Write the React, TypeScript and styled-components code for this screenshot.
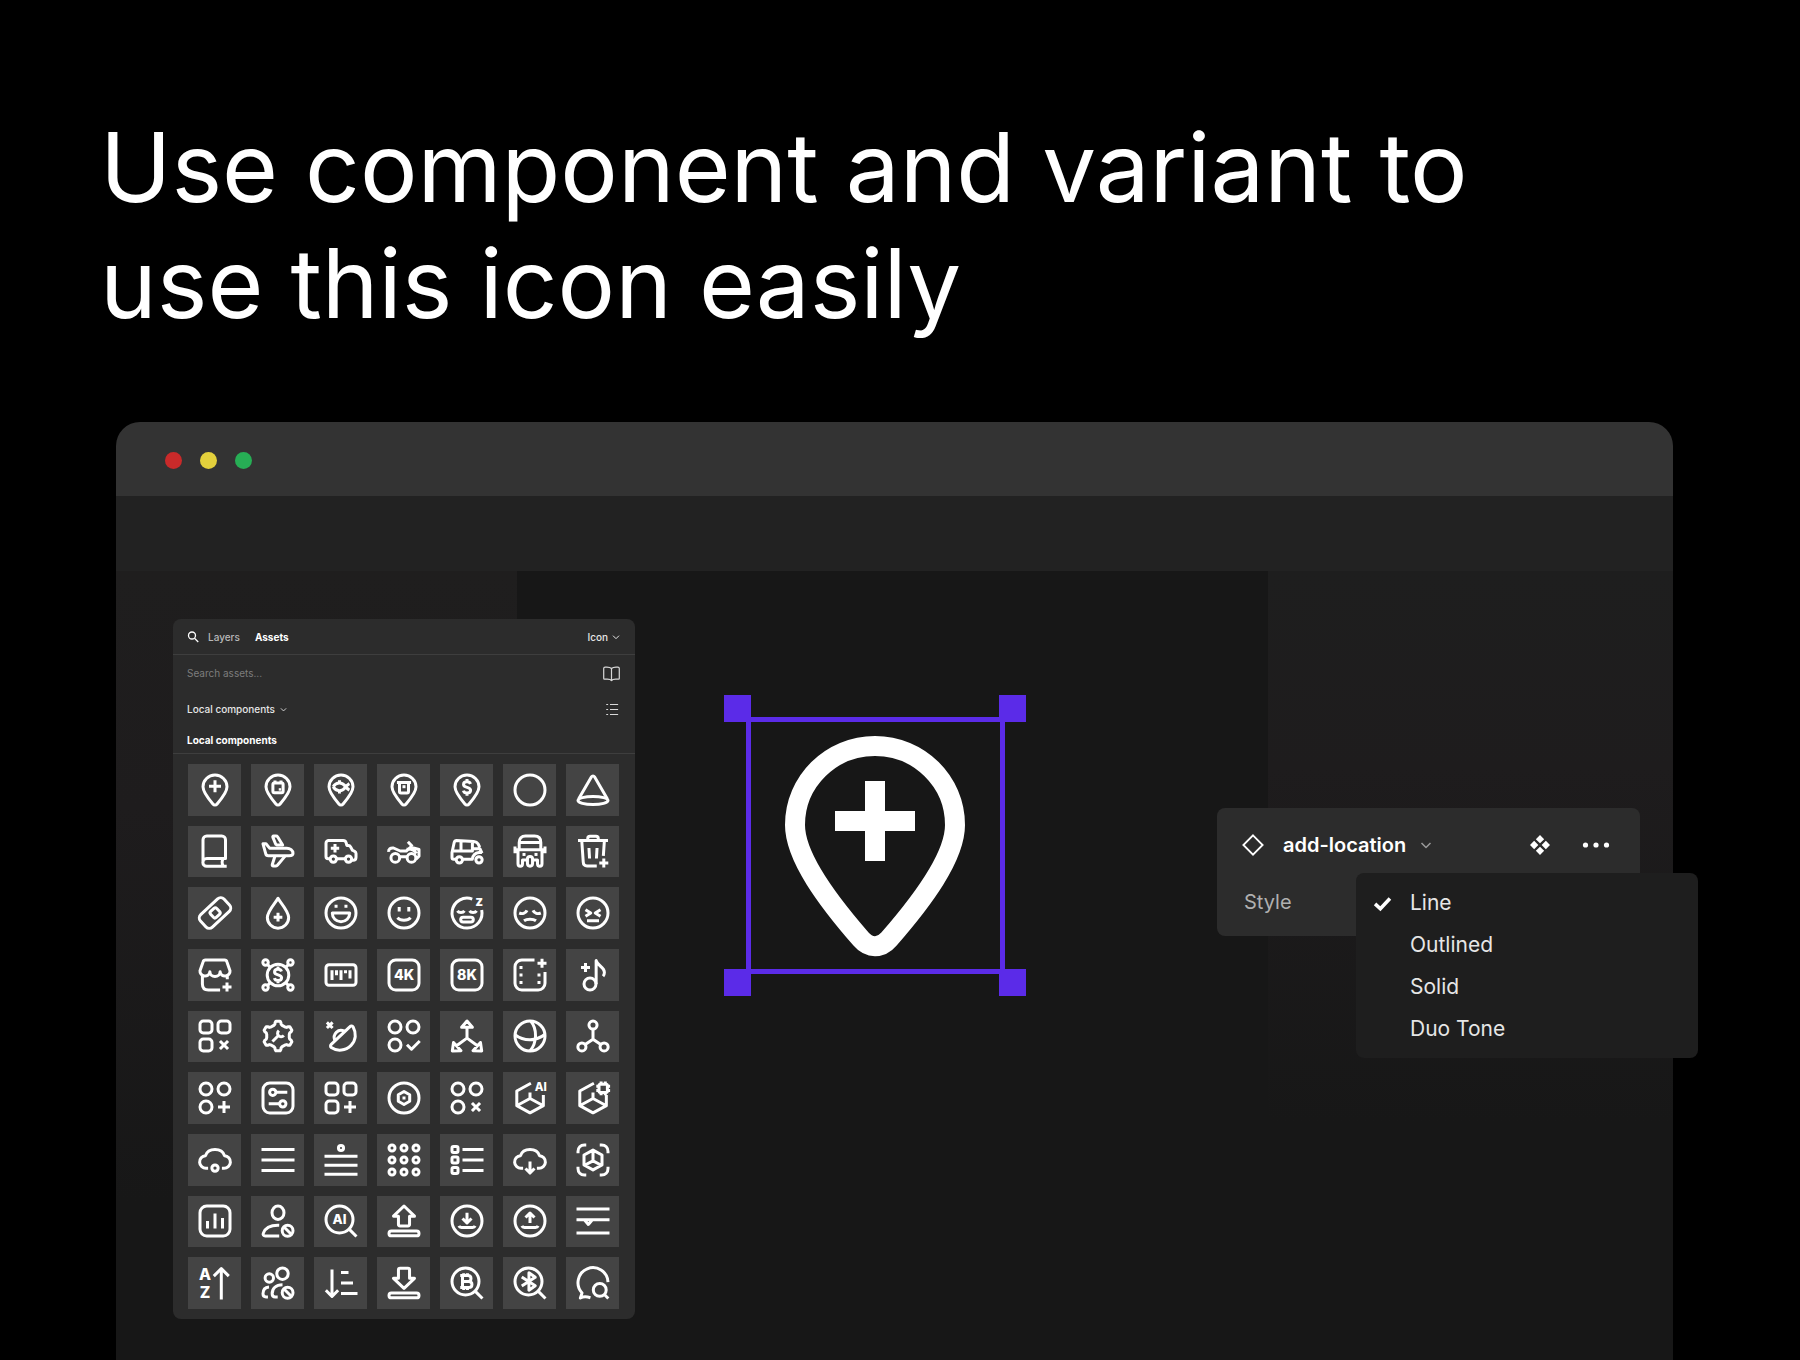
import React from "react";
import styled, { createGlobalStyle } from "styled-components";

const GlobalStyle = createGlobalStyle`
  *, *::before, *::after { box-sizing: border-box; }
  body {
    margin: 0;
    background: #000;
    color: #fff;
    font-family: Inter, "Liberation Sans", sans-serif;
  }
  button, input { font: inherit; color: inherit; }
`;

const Page = styled.main`
  min-height: 100vh;
  display: flex;
  flex-direction: column;
  gap: 81px;
  padding: 109px 127px 0 116px;
  overflow-x: hidden;
`;

const Headline = styled.h1`
  margin: 0 0 0 -16px;
  font-size: 96px;
  font-weight: 400;
  line-height: 116px;
`;

const AppWindow = styled.section`
  flex: 1;
  display: flex;
  flex-direction: column;
`;

const TitleBar = styled.header`
  display: flex;
  align-items: center;
  gap: 18px;
  height: 74px;
  padding: 3px 49px 0;
  border-radius: 24px 24px 0 0;
  background: #333;
`;

const Light = styled.span<{ $color: string }>`
  width: 17px;
  height: 17px;
  border-radius: 50%;
  background: ${(p) => p.$color};
`;

const ToolStrip = styled.div`
  height: 75px;
  background: #222;
`;

const Workspace = styled.div`
  flex: 1;
  display: grid;
  grid-template-columns: 401px 1fr 405px;
  grid-template-rows: 1fr;
  align-items: start;
  background: #171717;
`;

const SideColumn = styled.div<{ $side: "left" | "right" }>`
  grid-row: 1;
  grid-column: ${(p) => (p.$side === "left" ? 1 : 3)};
  align-self: stretch;
  background: ${(p) =>
    p.$side === "left"
      ? "linear-gradient(#1f1e1e, #1e1c1d 30%, #171717 80%)"
      : "linear-gradient(#1e1e1e, #1e1c1d 25%, #171717 70%)"};
`;

const AssetsPanel = styled.aside`
  grid-row: 1;
  grid-column: 1 / 3;
  width: 462px;
  height: 700px;
  margin: 48px 0 41px 57px;
  display: flex;
  flex-direction: column;
  border-radius: 8px;
  background: #2c2c2c;
  font-size: 10px;
  line-height: 16px;
`;

const PanelRow = styled.div<{ $height: number; $ruled?: boolean }>`
  display: flex;
  align-items: center;
  height: ${(p) => p.$height}px;
  padding: 0 15px 0 14px;
  border-bottom: ${(p) => (p.$ruled ? "1px solid #3e3e3e" : "0")};
`;

const Spacer = styled.span`
  flex: 1;
`;

const PlainButton = styled.button<{ $tone?: string; $weight?: number; $gap?: number }>`
  display: inline-flex;
  align-items: center;
  gap: ${(p) => p.$gap ?? 0}px;
  padding: 0;
  border: 0;
  background: none;
  color: ${(p) => p.$tone ?? "#fff"};
  font-weight: ${(p) => p.$weight ?? 400};
  white-space: nowrap;
  cursor: pointer;
`;

const Tabs = styled.nav`
  display: flex;
  gap: 15px;
  margin-left: 9px;
`;

const SearchField = styled.input`
  flex: 1;
  min-width: 0;
  padding: 0;
  border: 0;
  outline: 0;
  background: none;
  &::placeholder { color: #7d7d7d; opacity: 1; }
`;

const PanelHeading = styled.h2`
  margin: 0;
  font-size: 10px;
  font-weight: 700;
`;

const IconGrid = styled.div`
  flex: 1;
  display: grid;
  grid-template-columns: repeat(7, 1fr);
  grid-auto-rows: 1fr;
  gap: 10px;
  padding: 10px 16px 10px 15px;
`;

const Tile = styled.button`
  display: flex;
  align-items: center;
  justify-content: center;
  min-height: 0;
  padding: 0;
  border: 0;
  background: #444;
  cursor: pointer;
`;

const Glyph = styled.svg<{ $size: number; $stroke?: number }>`
  display: block;
  flex: none;
  width: ${(p) => p.$size}px;
  height: ${(p) => p.$size}px;
  overflow: visible;
  fill: none;
  stroke: currentColor;
  stroke-width: ${(p) => p.$stroke ?? 2};
  stroke-linejoin: round;

  .solid { fill: currentColor; stroke: none; }
  text {
    fill: currentColor;
    stroke: none;
    font-family: Inter, "Liberation Sans", sans-serif;
    font-weight: 800;
    text-anchor: middle;
  }
`;

const Selection = styled.figure`
  position: relative;
  grid-row: 1;
  grid-column: 2;
  justify-self: center;
  display: flex;
  align-items: center;
  justify-content: center;
  width: 259px;
  height: 257px;
  margin: 146px 34px 0 0;
  padding-right: 1px;
  border: 5px solid #5b2be8;
`;

const Handle = styled.span<{ $x: "left" | "right"; $y: "top" | "bottom" }>`
  position: absolute;
  ${(p) => p.$x}: ${(p) => (p.$x === "left" ? -27 : -26)}px;
  ${(p) => p.$y}: -27px;
  width: 27px;
  height: 27px;
  background: #5b2be8;
`;

const ComponentCard = styled.section`
  position: relative;
  grid-row: 1;
  grid-column: 2 / 4;
  justify-self: end;
  width: 423px;
  margin: 237px 33px 0 0;
  padding: 13px 30px 10px 25px;
  border-radius: 8px;
  background: #2c2c2c;
  font-size: 20px;
  line-height: 24px;
`;

const CardRow = styled.div`
  display: flex;
  align-items: center;
  height: 48px;
`;

const PropertyRow = styled(CardRow)`
  height: 57px;
  padding: 8px 0 0 2px;
  color: #b0b0b0;
`;

const CardTitle = styled.button`
  flex: 1;
  display: inline-flex;
  align-items: center;
  gap: 14px;
  padding: 0 0 0 19px;
  border: 0;
  background: none;
  font-weight: 600;
  cursor: pointer;

  svg { color: #9a9a9a; }
`;

const CardActions = styled.div`
  display: flex;
  align-items: center;
  gap: 32px;
`;

const Menu = styled.ul`
  position: absolute;
  top: 65px;
  left: 139px;
  width: 342px;
  margin: 0;
  padding: 9px 0 8px;
  border-radius: 8px;
  background: #1e1e1e;
  font-size: 21px;
  list-style: none;
`;

const MenuItem = styled.button`
  display: grid;
  grid-template-columns: 36px 1fr;
  align-items: center;
  width: 100%;
  height: 42px;
  padding: 0 18px;
  border: 0;
  background: none;
  color: #e6e6e6;
  text-align: left;
  cursor: pointer;

  svg { color: #fff; }
`;

/* ---------- icon drawings, all on a 24 unit board ---------- */

const P = ({ d }: { d: string }) => <path d={d} />;
const C = ({ x, y, r }: { x: number; y: number; r: number }) => <circle cx={x} cy={y} r={r} />;
const R = ({ x, y, w, h, r }: { x: number; y: number; w: number; h: number; r: number }) => (
  <rect x={x} y={y} width={w} height={h} rx={r} />
);
const Dot = ({ x, y, w = 2, h = 2 }: { x: number; y: number; w?: number; h?: number }) => (
  <rect className="solid" x={x - w / 2} y={y - h / 2} width={w} height={h} />
);
const Plus = ({ x, y, a = 3 }: { x: number; y: number; a?: number }) => (
  <path d={`M${x - a} ${y}h${a * 2}M${x} ${y - a}v${a * 2}`} />
);
const Cross = ({ x, y, a = 3 }: { x: number; y: number; a?: number }) => (
  <path d={`M${x - a} ${y - a}l${a * 2} ${a * 2}M${x + a} ${y - a}l${-a * 2} ${a * 2}`} />
);
const Letters = ({ x, y, size, children }: { x: number; y: number; size: number; children: string }) => (
  <text x={x} y={y} fontSize={size}>{children}</text>
);

const Pin = () => (
  <P d="M12 2C7.58 2 4 5.55 4 9.9c0 3.2 3.2 7.5 6.6 11.4.8.95 2 .95 2.8 0C16.8 17.4 20 13.1 20 9.9 20 5.55 16.42 2 12 2z" />
);
const AddLocation = () => (<><Pin /><Plus x={12} y={9.5} a={4} /></>);
const Face = () => <C x={12} y={12} r={10} />;
const Frame = () => <R x={2} y={2} w={20} h={20} r={4.5} />;
const Dollar = ({ y = 0 }: { y?: number }) => (
  <g transform={`translate(0 ${y})`}>
    <P d="M14.3 8.9c-.3-1-1.1-1.5-2.3-1.5-1.4 0-2.3.7-2.3 1.8 0 2.6 4.7 1.3 4.7 3.9 0 1.1-1 1.8-2.4 1.8-1.2 0-2.1-.5-2.4-1.6M12 5.6v1.8M12 14.9v1.8" />
  </g>
);
const ThreeCircles = () => (<><C x={6} y={6} r={4} /><C x={18} y={6} r={4} /><C x={6} y={18} r={4} /></>);
const ThreeSquares = () => (
  <><R x={2} y={2} w={8} h={8} r={2.2} /><R x={14} y={2} w={8} h={8} r={2.2} /><R x={2} y={14} w={8} h={8} r={2.2} /></>
);
const Blocked = () => (<><C x={18.4} y={18.5} r={3.6} /><P d="M16 16l5 5" /></>);
const Lens = () => (<><C x={11} y={11} r={9} /><P d="M17.4 17.4L22.3 22.3" /></>);
const Cloud = () => (
  <P d="M7.4 17.5H6.2a4.2 4.2 0 0 1-.5-8.4C6.5 6.6 9 5 12 5s5.5 1.6 6.300 4.100a4.200 4.200 0 0 1-.5 8.400h-1.200" />
);
const OpenCube = () => (
  <P d="M12.600 2.200L3.200 7.300v9.800L12 21.900l8.900-4.800V10M12 8.300v4M4 16.700l8-4.400 8 4.400" />
);
const LoadTray = () => <R x={2} y={18.7} w={20} h={3.2} r={1.6} />;
const CircleBase = () => <P d="M6.600 15.300c.3.700.9 1 1.700 1h7.400c.8 0 1.400-.3 1.700-1" />;

const gearOutline = (teeth: number, outer: number, inner: number) => {
  const points: string[] = [];
  const step = 360 / teeth;
  for (let i = 0; i < teeth; i += 1) {
    const marks: [number, number][] = [
      [-0.36, inner], [-0.25, inner + 0.5], [-0.2, outer - 0.8], [-0.13, outer],
      [0.13, outer], [0.2, outer - 0.8], [0.25, inner + 0.5], [0.36, inner],
    ];
    marks.forEach(([offset, radius]) => {
      const angle = (((i + offset) * step - 90) * Math.PI) / 180;
      points.push(`${(12 + radius * Math.cos(angle)).toFixed(2)} ${(12 + radius * Math.sin(angle)).toFixed(2)}`);
    });
  }
  return `M${points.join("L")}Z`;
};

const icons: [string, React.ReactNode][] = [
  ["add-location", <AddLocation />],
  ["location-bag", <><Pin /><R x={8.6} y={7.4} w={6.8} h={6.4} r={1} /><P d="M10 5.600v1.800M14 5.600v1.800" /><Dot x={13.3} y={11.6} w={1.6} h={1.6} /></>],
  ["location-fish", <><Pin /><P d="M6.800 9.900c2-3.400 6-3.300 8.100-.4.800 1.100 1.500 2 2.700 2.600M6.800 9.900c2 3.400 6 3.300 8.100.4.800-1.100 1.500-2 2.700-2.600M11 5.500v1.800M11 12.600v1.800" /></>],
  ["location-store", <><Pin /><P d="M7.300 7h9.400M9 7v6c0 .6.400 1 1 1h4c.6 0 1-.4 1-1V7" /><Dot x={12} y={9.8} /></>],
  ["location-dollar", <><Pin /><Dollar y={-0.9} /></>],
  ["circle", <Face />],
  ["cone", <><P d="M2.400 18L11 3.200c.5-.8 1.500-.8 2 0L21.600 18" /><ellipse cx={12} cy={19} rx={10} ry={2.7} /></>],

  ["book", <P d="M4 19.500V4.500A2.500 2.500 0 0 1 6.500 2h10A2.500 2.500 0 0 1 19 4.500V17H6.500a2.500 2.500 0 0 0 0 5.200H19.800M17.500 17c-1 1.700-1 3.500 0 5" />],
  ["airplane", <><P d="M2 7.200h2l2.400 2.900h11.400c2.300 0 4.200 1.600 4.200 3.400 0 1.100-1.200 1.600-2.600 1.600H5.600c-1 0-1.600-.5-1.800-1.400z" /><P d="M10 15.300L8.200 21c-.2.6.1 1 .7 1h1.800c.4 0 .7-.2.9-.5l5.400-6.400M10.500 7.500L8.600 2.900c-.2-.5 0-.9.5-.9h1.600c.5 0 .8.2 1 .5L15.100 8h-3.800z" /></>],
  ["ambulance", <><P d="M4.800 17.200H3.500C2.600 17.200 2 16.600 2 15.700V6.800C2 5.800 2.800 5 3.800 5h9.700c1 0 1.600.5 1.900 1.400l.5 1.900h1c.7 0 1.200.3 1.500.9l1.200 2.300 1.500.7c.6.3.9.8.9 1.400v2.600c0 1.300-.8 2-2 2h-1M9 17.200h5.900" /><C x={6.9} y={17.4} r={2.1} /><C x={17} y={17.4} r={2.1} /><Plus x={8} y={10.2} a={2.8} /></>],
  ["motorcycle", <><C x={6.2} y={16.6} r={2.9} /><C x={17} y={16.6} r={2.9} /><P d="M1.800 12.600C1.500 10.500 3 9.800 5 10l4.500 2h4l3-2.600 5.500 1.600v4.500l-1.800 1.800M9.200 15.800H14M13.800 10.800c2-.4 5 .3 6.500 2.800M14.600 5.800l3 3.200" /></>],
  ["minivan", <><P d="M4.700 17.500H3.200c-.8 0-1.200-.4-1.200-1.200V13L3.500 6.200C3.700 5.400 4.300 5 5 5l11.500.6c1.200.1 2.300.6 2.800 1.500l1.200 2.400M9 17.500h6.500c.4-2.700 2-4.200 4.500-4.500h2M2.600 12h13V5.800M8 5.300V12M15.600 10.500h5l1.400 3" /><C x={6.9} y={17.9} r={2.1} /><C x={20} y={17.9} r={2.1} /></>],
  ["bus", <><P d="M4.800 11V6.300C4.800 3.700 6.300 2 9 2h6c2.700 0 4.200 1.700 4.200 4.300V11M1.200 11.200h21.600M2 9v4.500M22 9v4.500M4.800 6.300h14.400M4 11.200v9.300c0 1 .6 1.600 1.500 1.600S7 21.500 7 20.500V18h3.200M20 11.200v9.300c0 1-.6 1.600-1.500 1.600s-1.500-.6-1.500-1.600V18h-3.200" /><R x={10.3} y={15.6} w={3.4} h={6.5} r={1.7} /><Dot x={8} y={14.3} /><Dot x={16} y={14.3} /></>],
  ["trash-add", <><P d="M2 5h20M8.500 5V3.700c0-.9.600-1.500 1.500-1.500h4c.9 0 1.500.6 1.500 1.500V5M4.500 5l1 14.500c.1 1.600 1 2.500 2.500 2.500h6.500M19.600 5l-.7 10.300M9.300 10l.4 7M14.700 10l-.4 7" /><Plus x={19.2} y={20} /></>],

  ["banknote", <g transform="rotate(-43 12 12)"><R x={1.3} y={6.3} w={21.4} h={11.4} r={3} /><R x={9.3} y={9.3} w={5.6} h={5.4} r={1.3} /></g>],
  ["blood-add", <><P d="M12 2.200C10.500 5 4.900 10.700 4.900 15a7.100 7.100 0 0 0 14.200 0c0-4.300-5.600-10-7.100-12.800z" /><Plus x={12} y={14.8} a={2.9} /></>],
  ["laugh", <><Face /><P d="M6.200 12h11.600c0 3.400-2.500 5.800-5.800 5.800S6.200 15.400 6.200 12z" /><Dot x={8.7} y={7.5} /><Dot x={15.3} y={7.5} /></>],
  ["smile", <><Face /><P d="M7.600 15.200c1 1.100 2.600 1.700 4.400 1.700s3.400-.6 4.400-1.700" /><Dot x={8.8} y={9.5} h={3} /><Dot x={15.2} y={9.5} h={3} /></>],
  ["sleep", <><P d="M15.500 2.700A10 10 0 1 0 21.800 10" /><P d="M5.600 10.600c1 1.500 3.700 1.500 4.700 0M13.700 10.600c1 1.500 3.700 1.500 4.700 0" /><R x={7.8} y={14.8} w={8.4} h={3.2} r={1.6} /><Letters x={20.2} y={7.4} size={9}>z</Letters></>],
  ["sad", <><Face /><P d="M4.800 12c2 .8 4.300.3 5.200-1.800M19.200 12c-2 .8-4.300.3-5.200-1.800M8 17.200c2-1.400 6-1.400 8 0" /></>],
  ["angry", <><Face /><P d="M7 9.800l3.500 2.200L7 14.200M17 9.800L13.500 12l3.500 2.200M8 17.200h8" /></>],

  ["store-add", <><P d="M5.600 2h12.800c.8 0 1.300.4 1.500 1.100L22 9.200a3.300 3.200 0 0 1-6.600.6 3.400 3.200 0 0 1-6.800 0A3.300 3.200 0 0 1 2 9.200l2.100-6.100C4.300 2.400 4.800 2 5.600 2zM3.600 12v6c0 2.500 1.400 4 4 4h7.800M20.200 12v2.800" /><Plus x={20} y={20} /></>],
  ["dollar-network", <><C x={12} y={12} r={7.2} /><Dollar y={0.8} /><C x={3.7} y={3.7} r={1.8} /><C x={20.3} y={3.7} r={1.8} /><C x={3.7} y={20.3} r={1.8} /><C x={20.3} y={20.3} r={1.8} /><P d="M5 5l1.900 1.900M19 5l-1.900 1.900M5 19l1.900-1.900M19 19l-1.900-1.900" /></>],
  ["ruler", <><R x={2} y={5.2} w={20} h={13.6} r={2} /><P d="M6 8.800v6.600M9 8.800v3.400M12 8.800v6.600M15 8.800v2M18 8.800v5.600" /></>],
  ["4k", <><Frame /><Letters x={12} y={15.4} size={9.4}>4K</Letters></>],
  ["8k", <><Frame /><Letters x={12} y={15.4} size={9.4}>8K</Letters></>],
  ["video-add", <><P d="M15 2H6.500A4.500 4.500 0 0 0 2 6.500v11A4.500 4.500 0 0 0 6.500 22h11a4.500 4.500 0 0 0 4.500-4.500V10" /><Plus x={20} y={4.2} /><Dot x={6} y={7} /><Dot x={6} y={12} /><Dot x={6} y={17} /><Dot x={18} y={12} /><Dot x={18} y={17} /></>],
  ["music-add", <><C x={10} y={18} r={4} /><P d="M14.100 18V2.400c.8 3.600 5.500 4 5.500 8 0 .9-.3 1.700-.9 2.400" /><Plus x={7} y={7} /></>],

  ["grid-remove", <><ThreeSquares /><Cross x={18} y={18} a={2.7} /></>],
  ["gear-wrench", <><P d={gearOutline(6, 10, 7.6)} /><P d="M8.300 15.700l4-4M12.600 8.400c-1.300 1.200-1 2.600-.2 3.400s2.300 1.100 3.500-.2" /></>],
  ["satellite", <><P d="M5.500 19.700c-.7-.6-.6-1.500 0-2.100L18 5.700c.7-.7 1.600-.5 2.100.3 2.300 4.200 1.900 9-1.400 12.200-3.600 3.600-9.100 4.300-13.200 1.500zM7.900 15.200c-1.800-4.400 2.200-8.500 6.500-6.300" /><Cross x={4.5} y={4.8} a={1.9} /></>],
  ["shapes-check", <><ThreeCircles /><P d="M14 17.800l3 3 5.500-5.500" /></>],
  ["axis", <P d="M12 6.200v7.200L5 18.500M12 13.400l7 5.100M12 2l3.600 4.200H8.400zM3 16.400l5 5.400-5.800.2zM21 16.400l-5 5.400 5.800.2z" />],
  ["ball", <><Face /><P d="M12.500 2c4.500 5.500 4.200 14.500-.5 20M2.200 11.300c5.800 4.400 14 4.200 19.600-.3" /></>],
  ["nodes", <><C x={12} y={4.7} r={2.7} /><C x={4.6} y={19.3} r={2.7} /><C x={19.4} y={19.3} r={2.7} /><P d="M12 7.400v6.800l-5.200 3.500M12 14.200l5.200 3.500" /></>],

  ["shapes-add", <><ThreeCircles /><Plus x={18} y={18} a={4} /></>],
  ["sliders", <><Frame /><C x={8.5} y={8.2} r={2.1} /><P d="M10.600 8.200h7.600M5.800 15.900h7.100" /><C x={15.2} y={15.9} r={2.1} /></>],
  ["grid-add", <><ThreeSquares /><Plus x={18} y={18} a={4} /></>],
  ["disc", <><Face /><P d="M12 7.700l3.800 2.100v4.400L12 16.300l-3.800-2.100V9.800z" /><Dot x={12} y={12} /></>],
  ["shapes-remove", <><ThreeCircles /><Cross x={18} y={18} a={2.7} /></>],
  ["cube-ai", <><OpenCube /><Letters x={19.2} y={7} size={7.6}>AI</Letters></>],
  ["cube-settings", <><OpenCube /><R x={16} y={2.8} w={5.6} h={5.6} r={1} /><P d="M17.400 2.800V1M20.200 2.800V1M17.400 8.400v1.800M20.200 8.400v1.800M16 4.200h-1.800M16 7h-1.800M21.600 4.200h1.800M21.600 7h1.800" /></>],

  ["cloud", <><Cloud /><C x={12} y={17.4} r={2.1} /></>],
  ["menu", <P d="M1 5h22M1 12h22M1 19h22" />],
  ["menu-dot", <><C x={12} y={4} r={1.7} /><P d="M1 9.500h22M1 15.500h22M1 21.500h22" /></>],
  ["dots-grid", <>{[4, 12, 20].map((y) => [4, 12, 20].map((x) => <C key={`${x}-${y}`} x={x} y={y} r={2} />))}</>],
  ["list", <>{[5, 12, 19].map((y) => <R key={y} x={2} y={y - 2} w={4} h={4} r={1} />)}<P d="M9 5h14M9 12h14M9 19h14" /></>],
  ["cloud-download", <><Cloud /><P d="M12 13v7.600M9 17.700l3 3 3-3" /></>],
  ["scan-cube", <><P d="M2 7.500V6.300C2 3.700 3.700 2 6.300 2h1.200M16.500 2h1.200C20.300 2 22 3.700 22 6.300v1.200M22 16.500v1.200c0 2.600-1.700 4.300-4.300 4.300h-1.200M7.500 22H6.300C3.700 22 2 20.300 2 17.700v-1.200" /><P d="M12 5.400l6 3.300v6.600l-6 3.300-6-3.300V8.700zM12 5.800v7M6.400 15.500l5.600-2.900 5.600 2.900" /></>],

  ["chart", <><Frame /><P d="M7 12v5M12 7v10M17 10v7" /></>],
  ["user-block", <><ellipse cx={12} cy={6.5} rx={4} ry={4.5} /><P d="M12.800 22H3.500c-1.100 0-1.700-.8-1.300-1.800 1.300-3.700 4.800-5.500 10.600-5.300" /><Blocked /></>],
  ["search-ai", <><Lens /><Letters x={11} y={14.3} size={8.8}>AI</Letters></>],
  ["upload", <><P d="M12 2L5 8.800h3.300v5.400c0 .7.400 1.100 1.100 1.100h5.200c.7 0 1.100-.4 1.100-1.100V8.800H19z" /><LoadTray /></>],
  ["circle-download", <><Face /><P d="M12 6.500v6.600M9 10.300l3 3 3-3" /><CircleBase /></>],
  ["circle-upload", <><Face /><P d="M12 13.400V7M9 9.700l3-3 3 3" /><CircleBase /></>],
  ["menu-collapse", <P d="M1 4h22M1 11.200h22M6.500 11.500l2.400 2.800 2.400-2.800M1 20h22" />],

  ["sort-az", <><Letters x={5.4} y={9.8} size={10.4}>A</Letters><Letters x={5.4} y={21.8} size={10.4}>Z</Letters><P d="M16.200 23V2.500M11.200 7.400l5-5 5 5" /></>],
  ["users-block", <><C x={6.2} y={8.7} r={2.8} /><C x={15} y={5.8} r={3.8} /><P d="M6 14.600c-2.700.2-4 2-4 4.600 0 1.400.7 2.100 2 2.100h1.300M15 13.200c-4.500 0-6.900 2.500-6.900 6 0 1.500.7 2.200 2 2.200h1.700" /><Blocked /></>],
  ["sort-down", <P d="M6 3v18M1.900 16.800L6 21l4.100-4.200M12 5h5M12 12h8M12 19h11" />],
  ["download", <><P d="M12 15.600L5 8.900h3.300V3.200c0-.7.400-1.100 1.100-1.100h5.200c.7 0 1.100.4 1.100 1.100v5.700H19z" /><LoadTray /></>],
  ["search-bitcoin", <><Lens /><P d="M7.500 7h5.200c2.600 0 2.600 4 0 4H9.200M7.500 15h5.700c2.800 0 2.800-4 0-4M9 7v8M9.800 5.500V7M12.300 5.500V7M9.800 15v1.600M12.300 15v1.600" /></>],
  ["search-bluetooth", <><Lens /><P d="M6.500 8l9 5.800-4.200 3V5.200l4.200 3-9 5.800" /></>],
  ["chat-search", <><P d="M22 11.400A10 10 0 1 0 4.700 18.600L3.600 22c2.200-1.200 4-1 6.700-.2" /><C x={16.5} y={16.6} r={4.3} /><P d="M19.600 19.700l2.600 2.600" /></>],
];

const ChevronDown = ({ size }: { size: number }) => (
  <Glyph $size={size} $stroke={3} viewBox="0 0 24 24" aria-hidden="true">
    <path d="M3 8l9 9 9-9" />
  </Glyph>
);

const styleOptions = ["Line", "Outlined", "Solid", "Duo Tone"];

export default function App() {
  const [chosen, setChosen] = React.useState("Line");

  return (
    <>
      <GlobalStyle />
      <Page>
        <Headline>
          Use component and variant to
          <br />
          use this icon easily
        </Headline>

        <AppWindow>
          <TitleBar>
            <Light $color="#c92a2a" />
            <Light $color="#e3d03c" />
            <Light $color="#27ae55" />
          </TitleBar>
          <ToolStrip />
          <Workspace>
            <SideColumn $side="left" />
            <SideColumn $side="right" />

            <AssetsPanel>
              <PanelRow $height={36} $ruled>
                <Glyph $size={12} $stroke={2.6} viewBox="0 0 24 24" aria-hidden="true">
                  <circle cx={10} cy={9} r={7} />
                  <path d="M15 14.500l7.500 7.500" />
                </Glyph>
                <Tabs>
                  <PlainButton $tone="#b8b8b8" $weight={500}>Layers</PlainButton>
                  <PlainButton $weight={700}>Assets</PlainButton>
                </Tabs>
                <Spacer />
                <PlainButton $tone="#e6e6e6" $weight={500} $gap={4}>
                  Icon
                  <ChevronDown size={8} />
                </PlainButton>
              </PanelRow>
              <PanelRow $height={36}>
                <SearchField type="search" aria-label="Search assets" placeholder="Search assets..." />
                <PlainButton aria-label="Library" $tone="#d8d8d8">
                  <Glyph $size={17} $stroke={1.7} viewBox="0 0 24 24">
                    <path d="M12 5c-1.500-1.500-4-2-6.500-2H3C2 3 1 3.600 1 4.800V19c0 .6.400 1 1 1h4c2.500 0 5 .3 6 2 1-1.700 3.500-2 6-2h4c.6 0 1-.4 1-1V4.800C23 3.600 22 3 21 3h-2.500C16 3 13.500 3.500 12 5zM12 5v17" />
                  </Glyph>
                </PlainButton>
              </PanelRow>
              <PanelRow $height={36}>
                <PlainButton $tone="#e6e6e6" $weight={500} $gap={5}>
                  Local components
                  <ChevronDown size={7} />
                </PlainButton>
                <Spacer />
                <PlainButton aria-label="Show as list" $tone="#d8d8d8">
                  <Glyph $size={15} $stroke={1.8} viewBox="0 0 24 24">
                    <path d="M2 4h3M2 12h3M2 20h3M8 4h13M8 12h13M8 20h13" />
                  </Glyph>
                </PlainButton>
              </PanelRow>
              <PanelRow $height={27} $ruled>
                <PanelHeading>Local components</PanelHeading>
              </PanelRow>
              <IconGrid>
                {icons.map(([name, drawing]) => (
                  <Tile key={name} aria-label={name}>
                    <Glyph $size={36} viewBox="0 0 24 24">{drawing}</Glyph>
                  </Tile>
                ))}
              </IconGrid>
            </AssetsPanel>

            <Selection>
              <Glyph $size={240} viewBox="0 0 24 24" role="img" aria-label="add-location">
                <AddLocation />
              </Glyph>
              <Handle $x="left" $y="top" />
              <Handle $x="right" $y="top" />
              <Handle $x="left" $y="bottom" />
              <Handle $x="right" $y="bottom" />
            </Selection>

            <ComponentCard>
              <CardRow>
                <Glyph $size={22} viewBox="0 0 24 24" aria-hidden="true">
                  <path d="M12 1.500L22.500 12 12 22.500 1.500 12z" strokeLinejoin="miter" />
                </Glyph>
                <CardTitle>
                  add-location
                  <ChevronDown size={12} />
                </CardTitle>
                <CardActions>
                  <PlainButton aria-label="Go to main component">
                    <Glyph $size={20} viewBox="0 0 24 24">
                      <path className="solid" d="M12 0l5 5-5 5-5-5zM12 14l5 5-5 5-5-5zM5 7l5 5-5 5-5-5zM19 7l5 5-5 5-5-5z" />
                    </Glyph>
                  </PlainButton>
                  <PlainButton aria-label="More options">
                    <Glyph $size={28} viewBox="0 0 28 28">
                      <circle className="solid" cx={3.5} cy={14} r={2.6} />
                      <circle className="solid" cx={14} cy={14} r={2.6} />
                      <circle className="solid" cx={24.5} cy={14} r={2.6} />
                    </Glyph>
                  </PlainButton>
                </CardActions>
              </CardRow>
              <PropertyRow>Style</PropertyRow>
              <Menu aria-label="Style">
                {styleOptions.map((option) => (
                  <li key={option}>
                    <MenuItem aria-pressed={option === chosen} onClick={() => setChosen(option)}>
                      <span>
                        {option === chosen && (
                          <Glyph $size={17} $stroke={5} viewBox="0 0 24 24" aria-hidden="true">
                            <path d="M1.500 12.500l7.500 7L22.500 5" strokeLinejoin="miter" />
                          </Glyph>
                        )}
                      </span>
                      {option}
                    </MenuItem>
                  </li>
                ))}
              </Menu>
            </ComponentCard>
          </Workspace>
        </AppWindow>
      </Page>
    </>
  );
}
